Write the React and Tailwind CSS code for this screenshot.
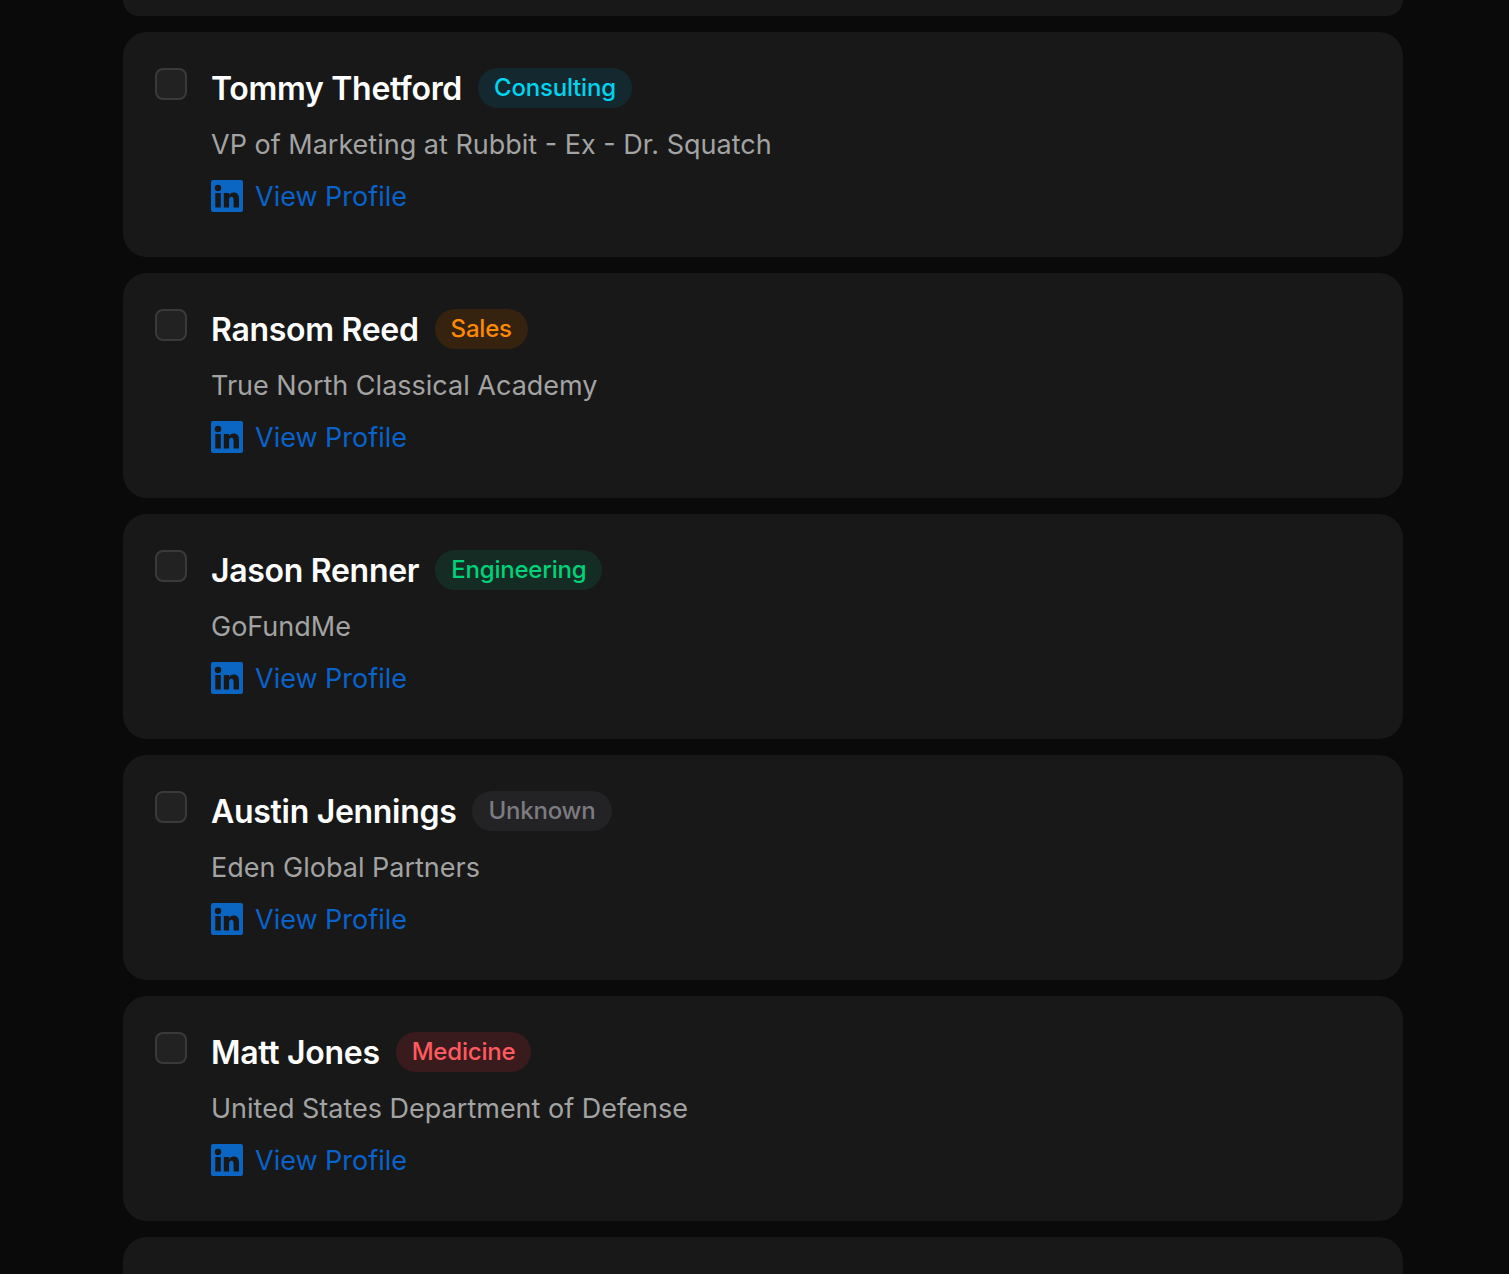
const PEOPLE = [
  { name: 'Tommy Thetford', tag: 'Consulting', tagClass: 'bg-[#14292f] text-[#00d4f0]', role: 'VP of Marketing at Rubbit - Ex - Dr. Squatch' },
  { name: 'Ransom Reed', tag: 'Sales', tagClass: 'bg-[#35220f] text-[#ff8a00]', role: 'True North Classical Academy' },
  { name: 'Jason Renner', tag: 'Engineering', tagClass: 'bg-[#142c23] text-[#00d27a]', role: 'GoFundMe' },
  { name: 'Austin Jennings', tag: 'Unknown', tagClass: 'bg-[#232325] text-[#7b7b80]', role: 'Eden Global Partners' },
  { name: 'Matt Jones', tag: 'Medicine', tagClass: 'bg-[#391a1d] text-[#ff5a5f]', role: 'United States Department of Defense' },
];

function LinkedinIcon() {
  return (
    <svg width="32" height="32" viewBox="0 0 32 32" className="shrink-0">
      <rect width="32" height="32" rx="2" fill="#0a66c2" />
      <rect x="4.300" y="13" width="5.500" height="14.500" fill="#181818" />
      <circle cx="7" cy="8" r="3.200" fill="#181818" />
      <path d="M12.800 13h5.200v2c.9-1.500 2.500-2.400 4.500-2.400 4.200 0 5.500 2.700 5.500 6.400v8.500h-5.400v-7.500c0-1.900-.5-3.200-2.200-3.200-1.800 0-2.300 1.400-2.300 3.200v7.500h-5.300z" fill="#181818" />
    </svg>
  );
}

function PersonCard({ person }) {
  return (
    <div className="flex h-[225px] shrink-0 gap-6 rounded-3xl bg-[#181818] px-8 pt-9">
      <div className="h-8 w-8 shrink-0 rounded-lg border-2 border-[#3a3a3a] bg-[#222222]" />
      <div className="flex flex-col">
        <div className="flex h-10 items-center gap-4">
          <span className="pt-px text-[32px] font-semibold tracking-[-0.3px] text-white">{person.name}</span>
          <span className={`flex h-10 items-center rounded-full px-4 text-2xl font-medium tracking-[-0.2px] ${person.tagClass}`}>{person.tag}</span>
        </div>
        <p className="mt-[17px] h-10 text-[27px] leading-10 text-[#a3a3a3]">{person.role}</p>
        <a className="mt-[11px] flex h-10 items-center gap-3 text-[27px] text-[#0a62cb]">
          <LinkedinIcon />
          <span className="pt-0.5">View Profile</span>
        </a>
      </div>
    </div>
  );
}

export default function App() {
  return (
    <div className="h-screen overflow-hidden bg-[#0a0a0a] font-['Inter',sans-serif]">
      <div className="ml-[123px] flex w-[1280px] flex-col gap-4 text-[0px]">
        <div className="h-4 rounded-b-3xl bg-[#181818]" />
        {PEOPLE.map(p => <PersonCard key={p.name} person={p} />)}
        <div className="h-[225px] rounded-3xl bg-[#181818]" />
      </div>
    </div>
  );
}
